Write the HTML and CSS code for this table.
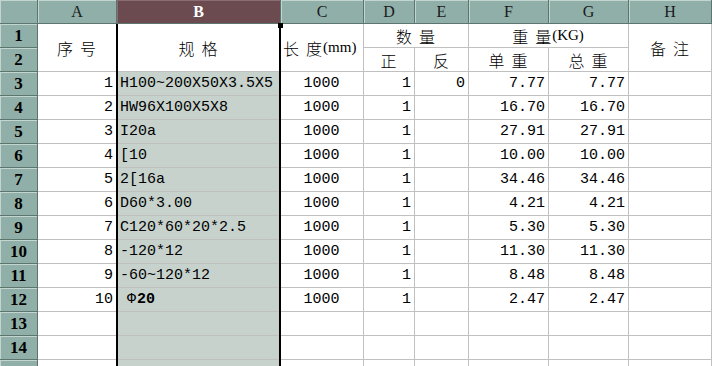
FILE: index.html
```html
<!DOCTYPE html>
<html>
<head>
<meta charset="utf-8">
<link rel="stylesheet" href="styles.css">
</head>
<body>
<div class="sheet">
  <div class="corner"></div>
  <div class="colhead">A</div>
  <div class="colhead sel">B</div>
  <div class="colhead">C</div>
  <div class="colhead">D</div>
  <div class="colhead">E</div>
  <div class="colhead">F</div>
  <div class="colhead">G</div>
  <div class="colhead">H</div>

  <div class="rowhead">1</div>
  <div class="c ctr cjk r2">序&nbsp;&nbsp;号</div>
  <div class="c ctr cjk r2">规&nbsp;&nbsp;格</div>
  <div class="c cjk r2">长&nbsp;&nbsp;度<span class="unit">(mm)</span></div>
  <div class="c ctr cjk c2">数&nbsp;&nbsp;量</div>
  <div class="c ctr cjk c2">重&nbsp;&nbsp;量<span class="unit">(KG)</span></div>
  <div class="c ctr cjk r2">备&nbsp;&nbsp;注</div>
  <div class="rowhead">2</div>
  <div class="c ctr cjk">正</div>
  <div class="c ctr cjk">反</div>
  <div class="c ctr cjk">单&nbsp;&nbsp;重</div>
  <div class="c ctr cjk">总&nbsp;&nbsp;重</div>

  <div class="rowhead">3</div><div class="c r">1</div><div class="c b">H100~200X50X3.5X5</div><div class="c ctr">1000</div><div class="c r">1</div><div class="c r">0</div><div class="c r">7.77</div><div class="c r">7.77</div><div class="c"></div>
  <div class="rowhead">4</div><div class="c r">2</div><div class="c b">HW96X100X5X8</div><div class="c ctr">1000</div><div class="c r">1</div><div class="c r"></div><div class="c r">16.70</div><div class="c r">16.70</div><div class="c"></div>
  <div class="rowhead">5</div><div class="c r">3</div><div class="c b">I20a</div><div class="c ctr">1000</div><div class="c r">1</div><div class="c r"></div><div class="c r">27.91</div><div class="c r">27.91</div><div class="c"></div>
  <div class="rowhead">6</div><div class="c r">4</div><div class="c b">[10</div><div class="c ctr">1000</div><div class="c r">1</div><div class="c r"></div><div class="c r">10.00</div><div class="c r">10.00</div><div class="c"></div>
  <div class="rowhead">7</div><div class="c r">5</div><div class="c b">2[16a</div><div class="c ctr">1000</div><div class="c r">1</div><div class="c r"></div><div class="c r">34.46</div><div class="c r">34.46</div><div class="c"></div>
  <div class="rowhead">8</div><div class="c r">6</div><div class="c b">D60*3.00</div><div class="c ctr">1000</div><div class="c r">1</div><div class="c r"></div><div class="c r">4.21</div><div class="c r">4.21</div><div class="c"></div>
  <div class="rowhead">9</div><div class="c r">7</div><div class="c b">C120*60*20*2.5</div><div class="c ctr">1000</div><div class="c r">1</div><div class="c r"></div><div class="c r">5.30</div><div class="c r">5.30</div><div class="c"></div>
  <div class="rowhead">10</div><div class="c r">8</div><div class="c b">-120*12</div><div class="c ctr">1000</div><div class="c r">1</div><div class="c r"></div><div class="c r">11.30</div><div class="c r">11.30</div><div class="c"></div>
  <div class="rowhead">11</div><div class="c r">9</div><div class="c b">-60~120*12</div><div class="c ctr">1000</div><div class="c r">1</div><div class="c r"></div><div class="c r">8.48</div><div class="c r">8.48</div><div class="c"></div>
  <div class="rowhead">12</div><div class="c r">10</div><div class="c b"><span class="phi">Φ</span><b>20</b></div><div class="c ctr">1000</div><div class="c r">1</div><div class="c r"></div><div class="c r">2.47</div><div class="c r">2.47</div><div class="c"></div>
  <div class="rowhead">13</div><div class="c"></div><div class="c b"></div><div class="c"></div><div class="c"></div><div class="c"></div><div class="c"></div><div class="c"></div><div class="c"></div>
  <div class="rowhead">14</div><div class="c"></div><div class="c b"></div><div class="c"></div><div class="c"></div><div class="c"></div><div class="c"></div><div class="c"></div><div class="c"></div>
  <div class="rowhead"></div><div class="c"></div><div class="c b"></div><div class="c"></div><div class="c"></div><div class="c"></div><div class="c"></div><div class="c"></div><div class="c"></div>

  <div class="selection"></div>
  <div class="handle"></div>
</div>
</body>
</html>
```
FILE: styles.css
```css
html, body {
  margin: 0;
  padding: 0;
  background: #fff;
  overflow: hidden;
}

.sheet {
  position: relative;
  display: grid;
  grid-template-columns: 38px 79px 164px 83px 51px 54px 80px 80px 83px;
  grid-auto-rows: 24px;
  width: 712px;
  font-family: "Liberation Mono", monospace;
  font-size: 15px;
  color: #000;
}

.corner,
.colhead,
.rowhead {
  box-sizing: border-box;
  background: #8fafa8;
  border-right: 1px solid #5d756f;
  border-bottom: 1px solid #5d756f;
  box-shadow: inset 1px 1px 0 #c2d5cf;
  display: flex;
  align-items: center;
  justify-content: center;
  font-family: "Liberation Serif", serif;
}

.colhead {
  font-size: 16px;
  font-weight: normal;
  color: #1a1a1a;
  padding-top: 1px;
}

.colhead.sel {
  background: #6b4a50;
  color: #fff;
  font-weight: bold;
  box-shadow: inset 1px 1px 0 #8a6d72;
}

.rowhead {
  font-size: 17px;
  font-weight: bold;
}

.c {
  box-sizing: border-box;
  border-right: 1px solid #c0c0c0;
  border-bottom: 1px solid #c0c0c0;
  display: flex;
  align-items: center;
  white-space: nowrap;
  padding: 0 3px 0 2px;
  min-width: 0;
}

.r { justify-content: flex-end; }
.ctr { justify-content: center; }
.r2 { grid-row: span 2; }
.c2 { grid-column: span 2; }

.b {
  background: #c7d2cd;
  padding-left: 3px;
}

.cjk {
  font-family: "Noto Sans CJK SC", sans-serif;
  font-size: 16px;
  font-weight: 300;
}

.unit {
  font-family: "Liberation Serif", serif;
  font-size: 15px;
  margin-left: 1px;
}

.phi {
  margin-left: 7px;
  margin-right: 1px;
  font-weight: normal;
}

.selection {
  position: absolute;
  left: 116px;
  top: 24px;
  width: 165px;
  bottom: 0;
  box-sizing: border-box;
  border-left: 2px solid #000;
  border-right: 2px solid #000;
  pointer-events: none;
}

.handle {
  position: absolute;
  left: 278px;
  top: 23px;
  width: 5px;
  height: 5px;
  background: #000;
}
```
